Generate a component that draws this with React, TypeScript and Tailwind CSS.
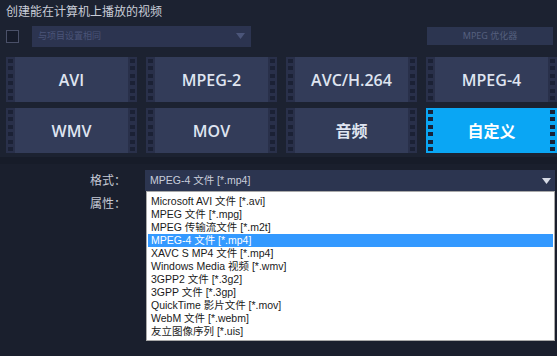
import React from "react";

const holes = [0, 1, 2, 3, 4, 5];

function Strip({ sel }: { sel: boolean }) {
  return (
    <div className={`w-[9px] h-full flex flex-col justify-between items-center py-[2px] ${sel ? "bg-[#0aa6f4]" : "bg-[#29304a]"}`}>
      {holes.map((h) => (
        <div key={h} className={`w-[5px] h-[4px] ${sel ? "bg-[#182238]" : "bg-[#1b2135]"}`} />
      ))}
    </div>
  );
}

function Tile({ label, sel = false }: { label: string; sel?: boolean }) {
  return (
    <div className="flex h-[45px]">
      <Strip sel={sel} />
      <div
        className={`flex-1 flex items-center justify-center text-[16px] font-semibold ${
          sel ? "bg-[#0aa6f4] text-white" : "bg-[#333c59] text-[#dfe4f0]"
        }`}
        style={{ fontFamily: '"Open Sans","Noto Sans CJK SC",sans-serif' }}
      >
        {label}
      </div>
      <Strip sel={sel} />
    </div>
  );
}

const items = [
  "Microsoft AVI 文件 [*.avi]",
  "MPEG 文件 [*.mpg]",
  "MPEG 传输流文件 [*.m2t]",
  "MPEG-4 文件 [*.mp4]",
  "XAVC S MP4 文件 [*.mp4]",
  "Windows Media 视频 [*.wmv]",
  "3GPP2 文件 [*.3g2]",
  "3GPP 文件 [*.3gp]",
  "QuickTime 影片文件 [*.mov]",
  "WebM 文件 [*.webm]",
  "友立图像序列 [*.uis]",
];

const listFont = { fontFamily: '"Liberation Sans","Noto Sans CJK SC",sans-serif' };

export default function App() {
  return (
    <div
      className="w-[557px] h-[356px] bg-[#1c2231] overflow-hidden flex flex-col"
      style={{ fontFamily: '"Noto Sans","Noto Sans CJK SC",sans-serif' }}
    >
      <div className="pl-[6px] pt-[2px] h-[24px] text-[12px] text-[#c9cdd8] leading-[20px]">
        创建能在计算机上播放的视频
      </div>
      <div className="flex items-center h-[24px] pl-[6px] pr-[4px]">
        <div className="w-[13px] h-[13px] border border-[#4a5068] bg-[#161b2a]" />
        <div className="ml-[13px] w-[219px] h-[21px] bg-[#2c3450] flex items-center justify-between px-[6px]">
          <span className="text-[9px] text-[#4b5579]">与项目设置相同</span>
          <svg width="9" height="6" viewBox="0 0 9 6"><path d="M0 0h9L4.5 6z" fill="#4b5579" /></svg>
        </div>
        <div className="ml-auto w-[126px] h-[18px] bg-[#2c3550] flex items-center justify-center text-[9px] text-[#56607f]">
          MPEG 优化器
        </div>
      </div>
      <div className="grid grid-cols-4 gap-x-[9px] gap-y-[6px] pl-[6px] pt-[9px]">
        <Tile label="AVI" />
        <Tile label="MPEG-2" />
        <Tile label="AVC/H.264" />
        <Tile label="MPEG-4" />
        <Tile label="WMV" />
        <Tile label="MOV" />
        <Tile label="音频" />
        <Tile label="自定义" sel />
      </div>
      <div className="mt-[4px] h-[7px] bg-[#171c29]" />
      <div className="flex-1 bg-[#1a1f2d] relative">
        <div className="flex items-center pt-[6px]">
          <div className="w-[145px] pl-[90px] text-[12px] text-[#c6cad6]">格式：</div>
          <div
            className="w-[410px] h-[21px] bg-[#2c3550] flex items-center justify-between pl-[5px] pr-[4px] text-[10.5px] text-[#c9cedb]"
            style={listFont}
          >
            <span>MPEG-4 文件 [*.mp4]</span>
            <svg width="9" height="6" viewBox="0 0 9 6"><path d="M0 0h9L4.5 6z" fill="#d6dae4" /></svg>
          </div>
        </div>
        <div className="pl-[90px] pt-[4px] text-[12px] text-[#c6cad6]">属性：</div>
        <div
          className="absolute left-[146px] top-[27px] w-[409px] h-[150px] bg-white border border-[#a9a9a9] pt-[3px] px-[1px]"
          style={listFont}
        >
          {items.map((it, i) => (
            <div
              key={it}
              className={`h-[13px] leading-[13px] pl-[3px] text-[10.5px] whitespace-nowrap overflow-hidden ${
                i === 3 ? "bg-[#3399ff] text-white" : "text-[#1a1a1a]"
              }`}
            >
              {it}
            </div>
          ))}
        </div>
      </div>
    </div>
  );
}
